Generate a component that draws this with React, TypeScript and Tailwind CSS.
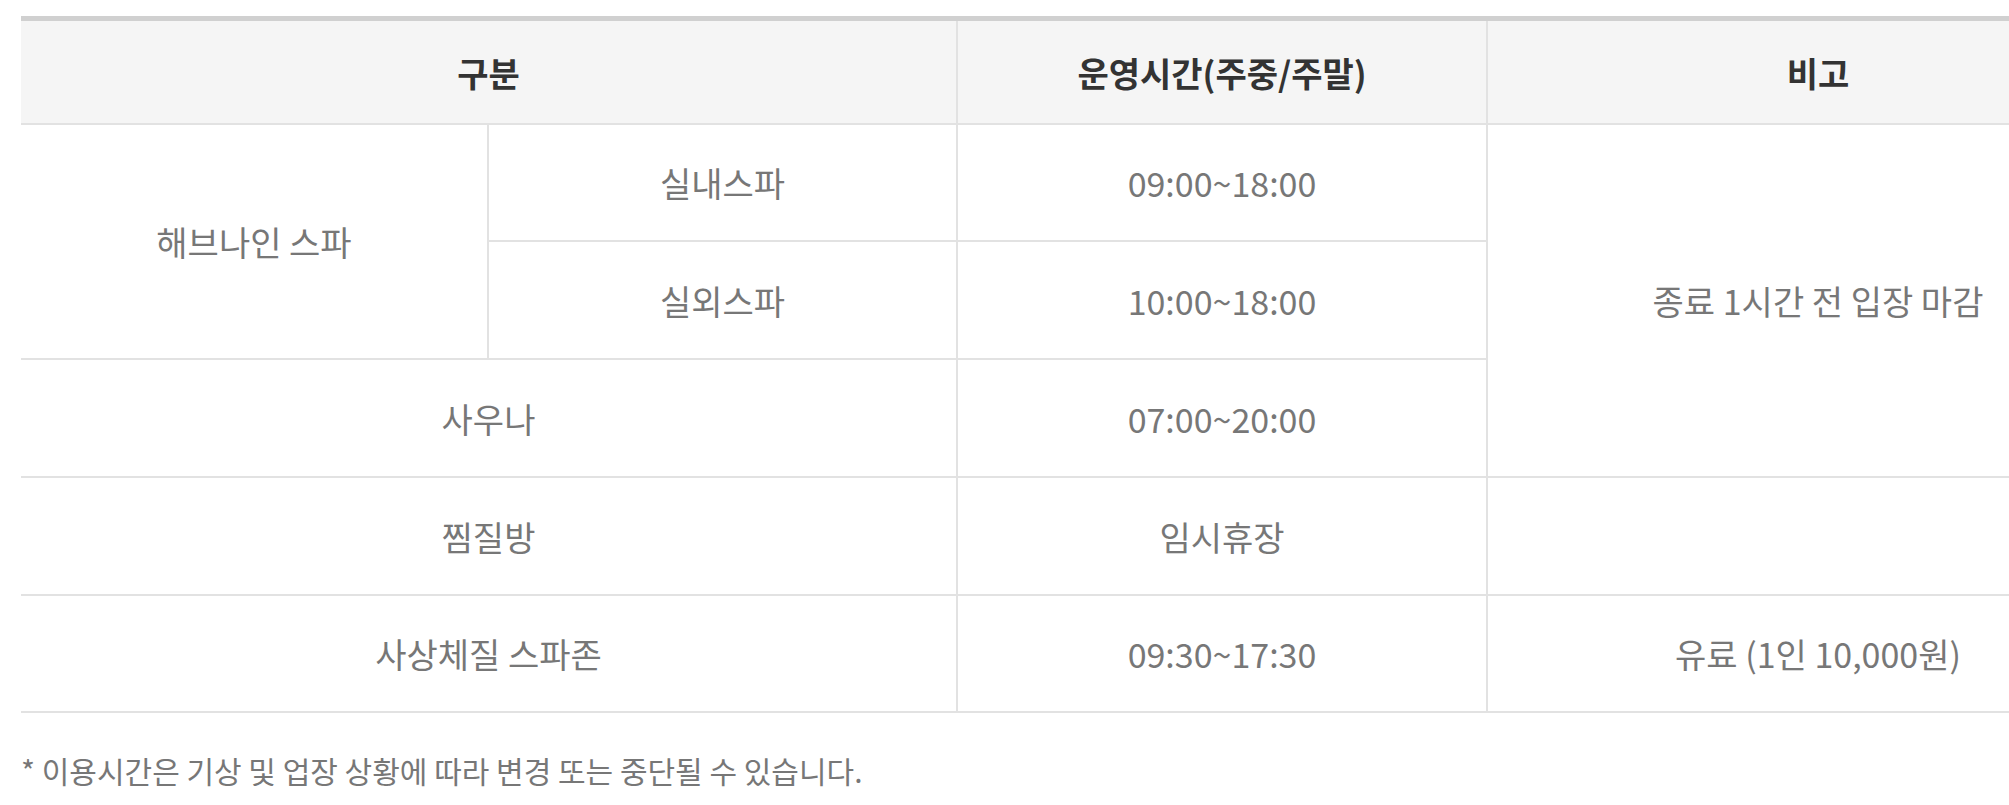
import React from "react";

const font = { fontFamily: '"Noto Sans CJK KR", "Noto Sans", sans-serif' };

export default function App() {
  const cell =
    "flex items-center justify-center border-b-2 border-[#e2e2e2] text-[34px] text-[#777777] whitespace-nowrap";
  const head =
    "flex items-center justify-center border-b-2 border-[#e2e2e2] bg-[#f5f5f5] text-[34px] font-bold text-[#333333] whitespace-nowrap";
  return (
    <div className="w-full overflow-hidden bg-white pt-[16px] pb-[20px]" style={font}>
      <div className="pl-[21px]">
        <div className="grid w-[2127px] grid-cols-[468px_469px_530px_660px] grid-rows-[104px_117px_118px_118px_118px_117px] border-t-[5px] border-[#d0d0d0]">
          <div className={`${head} col-span-2 border-r-2`}>구분</div>
          <div className={`${head} border-r-2`}>운영시간(주중/주말)</div>
          <div className={head}>비고</div>

          <div className={`${cell} row-span-2 border-r-2`}>해브나인 스파</div>
          <div className={`${cell} border-r-2`}>실내스파</div>
          <div className={`${cell} border-r-2`}>09:00~18:00</div>
          <div className={`${cell} row-span-3`}>종료 1시간 전 입장 마감</div>

          <div className={`${cell} border-r-2`}>실외스파</div>
          <div className={`${cell} border-r-2`}>10:00~18:00</div>

          <div className={`${cell} col-span-2 border-r-2`}>사우나</div>
          <div className={`${cell} border-r-2`}>07:00~20:00</div>

          <div className={`${cell} col-span-2 border-r-2`}>찜질방</div>
          <div className={`${cell} border-r-2`}>임시휴장</div>
          <div className={cell}></div>

          <div className={`${cell} col-span-2 border-r-2`}>사상체질 스파존</div>
          <div className={`${cell} border-r-2`}>09:30~17:30</div>
          <div className={cell}>유료 (1인 10,000원)</div>
        </div>
        <p className="mt-[35px] text-[30px] leading-[45px] text-[#777777]">
          * 이용시간은 기상 및 업장 상황에 따라 변경 또는 중단될 수 있습니다.
        </p>
      </div>
    </div>
  );
}
